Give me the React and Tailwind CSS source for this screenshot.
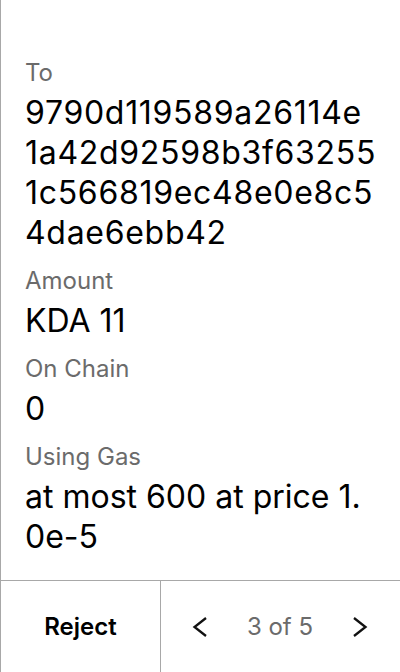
import React from 'react'

// address wraps the same way as in the wallet (18 chars per row)
const address = ['9790d119589a26114e', '1a42d92598b3f63255', '1c566819ec48e0e8c5', '4dae6ebb42']

const fields = [
  { label: 'To', lines: address },
  { label: 'Amount', lines: ['KDA 11'] },
  { label: 'On Chain', lines: ['0'] },
  { label: 'Using Gas', lines: ['at most 600 at price 1.', '0e-5'] },
]

function Chevron({ dir }) {
  const d = dir === 'left' ? 'M14 2 L2.5 11 L14 20' : 'M2 2 L13.5 11 L2 20'
  return (
    <svg width="16" height="22" viewBox="0 0 16 22" fill="none">
      <path d={d} stroke="#111" strokeWidth="2.3" strokeLinecap="butt" strokeLinejoin="miter" />
    </svg>
  )
}

export default function App() {
  return (
    <div
      className="h-[672px] w-full flex flex-col bg-white border-l border-[#a8a8a8] text-black"
      style={{ fontFamily: 'Inter, "Noto Sans", sans-serif' }}
    >
      <div className="flex-1 px-6 pt-[57px] flex flex-col gap-3">
        {fields.map((f) => (
          <div key={f.label} className="flex flex-col gap-1">
            <div className="text-[24px] leading-[32px] text-[#6b6b6b]">{f.label}</div>
            <div className={f.label === 'To' ? 'text-[32px] leading-[40px] tracking-[0.7px]' : 'text-[32px] leading-[40px]'}>
              {f.lines.map((l) => (
                <div key={l} className="whitespace-nowrap">{l}</div>
              ))}
            </div>
          </div>
        ))}
      </div>
      <div className="h-[92px] flex border-t border-[#a8a8a8]">
        <button className="w-[160px] flex items-center justify-center text-[24px] font-semibold border-r border-[#a8a8a8]">
          Reject
        </button>
        <div className="flex-1 flex items-center justify-between pl-[31px] pr-[32px]">
          <Chevron dir="left" />
          <span className="text-[24px] text-[#6b6b6b]">3 of 5</span>
          <Chevron dir="right" />
        </div>
      </div>
    </div>
  )
}
